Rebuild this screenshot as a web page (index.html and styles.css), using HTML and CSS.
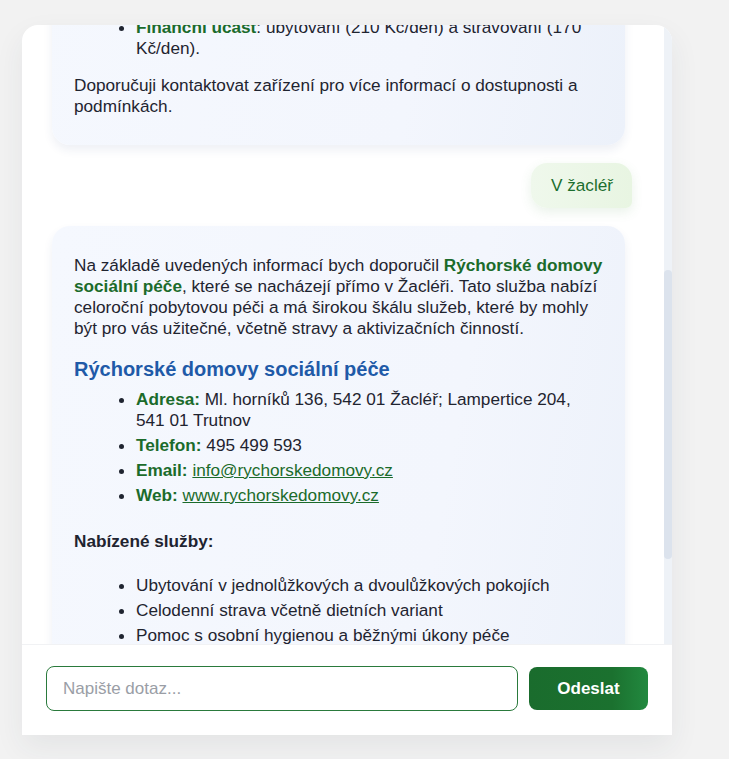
FILE: index.html
```html
<!DOCTYPE html>
<html lang="cs">
<head>
<meta charset="utf-8">
<title>Chat</title>
<link rel="stylesheet" href="styles.css">
</head>
<body>
<div class="page">
  <div class="chat">
    <div class="viewport">
      <div class="messages" id="messages">
        <div class="msg bot">
          <p>Dobrý den! Jsem virtuální asistent pro vyhledávání sociálních služeb. Napište mi, jaký typ služby hledáte a v jaké lokalitě, a pokusím se vám doporučit vhodné zařízení.</p>
        </div>
        <div class="msg user"><span>Domov pro seniory Trutnov</span></div>
        <div class="msg bot">
          <p>Podle dostupných informací bych vám doporučil <strong>Domov pro seniory Trutnov</strong>, který poskytuje celoroční pobytové služby pro seniory se sníženou soběstačností.</p>
          <h3>Domov pro seniory Trutnov</h3>
          <ul class="facts">
            <li><strong>Adresa:</strong> Kryblická 446, 541 01 Trutnov</li>
            <li><strong>Telefon:</strong> 499 840 111</li>
            <li><strong>Email:</strong> <a href="#">info@dstrutnov.cz</a></li>
            <li><strong>Kapacita:</strong> 120 lůžek</li>
            <li><strong>Cílová skupina:</strong> senioři od 65 let se sníženou soběstačností</li>
            <li><strong>Typ zařízení:</strong> domov pro seniory</li>
            <li><strong>Finanční účast</strong>: ubytování (210 Kč/den) a stravování (170 Kč/den).</li>
          </ul>
          <p>Doporučuji kontaktovat zařízení pro více informací o dostupnosti a podmínkách.</p>
        </div>
        <div class="msg user"><span>V žacléř</span></div>
        <div class="msg bot" id="current">
          <p>Na základě uvedených informací bych doporučil <strong>Rýchorské domovy sociální péče</strong>, které se nacházejí přímo v Žacléři. Tato služba nabízí celoroční pobytovou péči a má širokou škálu služeb, které by mohly být pro vás užitečné, včetně stravy a aktivizačních činností.</p>
          <h3>Rýchorské domovy sociální péče</h3>
          <ul class="facts contacts">
            <li><strong>Adresa:</strong> Ml. horníků 136, 542 01 Žacléř; Lampertice 204, 541&nbsp;01 Trutnov</li>
            <li><strong>Telefon:</strong> 495 499 593</li>
            <li><strong>Email:</strong> <a href="#">info@rychorskedomovy.cz</a></li>
            <li><strong>Web:</strong> <a href="#">www.rychorskedomovy.cz</a></li>
          </ul>
          <p class="label"><b>Nabízené služby:</b></p>
          <ul class="facts services">
            <li>Ubytování v jednolůžkových a dvoulůžkových pokojích</li>
            <li>Celodenní strava včetně dietních variant</li>
            <li>Pomoc s osobní hygienou a běžnými úkony péče</li>
            <li>Zdravotní a ošetřovatelská péče</li>
            <li>Aktivizační a volnočasové činnosti</li>
            <li>Sociální poradenství</li>
          </ul>
          <p>Pro aktuální informace o volných místech doporučuji zařízení kontaktovat.</p>
        </div>
      </div>
      <div class="track"><div class="thumb" id="thumb"></div></div>
    </div>
    <form class="composer" onsubmit="return false;">
      <input class="field" type="text" placeholder="Napište dotaz..." autofocus>
      <button class="send" type="submit">Odeslat</button>
    </form>
  </div>
</div>
<script src="script.js"></script>
</body>
</html>
```

FILE: styles.css
```css
* { box-sizing: border-box; }

html, body {
  margin: 0;
  height: 100%;
  overflow: hidden;
}

body {
  background: #f2f2f2;
  font-family: "Liberation Sans", Arial, Helvetica, sans-serif;
  color: #1f2430;
}

.page {
  padding: 25px 0 0 22px;
}

.chat {
  width: 650px;
  height: 710px;
  background: #ffffff;
  border-radius: 16px 16px 0 0;
  box-shadow: 0 12px 30px rgba(40, 50, 70, 0.07);
  display: flex;
  flex-direction: column;
  overflow: hidden;
}

.viewport {
  flex: 1;
  min-height: 0;
  display: flex;
}

.messages {
  flex: 1;
  min-width: 0;
  overflow-y: auto;
  scrollbar-width: none;
  padding: 25px 32px 20px 30px;
  display: flex;
  flex-direction: column;
  gap: 18px;
}

.messages::-webkit-scrollbar {
  display: none;
}

.track {
  flex: none;
  width: 8px;
  background: #eef2f7;
}

.thumb {
  width: 8px;
  background: #dce3ed;
  border-radius: 4px;
}

.msg {
  font-size: 17.2px;
  line-height: 21px;
}

.user {
  align-self: flex-end;
}
.user span {
  display: block;
  padding: 12px 19px 12px 20px;
  color: #1c6e2e;
  background: linear-gradient(90deg, #eff8ec 0%, #e8f5e2 100%);
  border-radius: 16px 16px 6px 16px;
  box-shadow: 0 4px 12px rgba(70, 150, 70, 0.12);
}

.bot {
  align-self: stretch;
  margin-right: 7px;
  padding: 13px 18px 12px 22px;
  background: linear-gradient(100deg, #f5f8fe 0%, #f3f6fd 65%, #ecf1fa 100%);
  border-radius: 18px;
  box-shadow: 0 5px 10px rgba(40, 70, 130, 0.08);
}

.bot p {
  margin: 16px 0;
}

.bot strong {
  color: #1b6b2b;
}

.bot b {
  color: #1f2430;
}

.bot h3 {
  margin: 18px 0 8px;
  font-size: 20px;
  line-height: 24px;
  color: #1f5aa8;
}

.facts {
  margin: 0 0 16px;
  padding-left: 62px;
}

.facts li {
  margin-bottom: 4px;
}

.facts a {
  color: #1b6b2b;
  text-decoration: underline;
}

.contacts {
  margin-bottom: 25px;
}

.bot p.label {
  margin: 0 0 23px;
}

.composer {
  flex: none;
  display: flex;
  align-items: center;
  gap: 11px;
  padding: 21px 24px 24px;
  background: #ffffff;
  border-top: 1px solid #f1f2f4;
}

.field {
  flex: 1;
  height: 45px;
  padding: 0 16px;
  border: 1px solid #2a7a3c;
  border-radius: 8px;
  font-family: "Liberation Sans", Arial, sans-serif;
  font-size: 17px;
  color: #1f2430;
  outline: none;
  caret-color: #6d9de8;
}

.field::placeholder {
  color: #9a9ea6;
}

.send {
  width: 119px;
  height: 43px;
  border: 0;
  border-radius: 8px;
  background: linear-gradient(90deg, #1a6c2d 0%, #1b712f 70%, #22893f 100%);
  color: #ffffff;
  font-family: "Liberation Sans", Arial, sans-serif;
  font-size: 17px;
  font-weight: bold;
}
```

FILE: script.js
```js
(function () {
  var box = document.getElementById('messages');
  var cur = document.getElementById('current');
  var thumb = document.getElementById('thumb');
  var offset = cur.getBoundingClientRect().top - box.getBoundingClientRect().top + box.scrollTop;
  box.scrollTop = offset - 201;
  function update() {
    var h = box.clientHeight;
    var total = box.scrollHeight;
    thumb.style.height = (h * h / total) + 'px';
    thumb.style.marginTop = (box.scrollTop / total * h) + 'px';
  }
  update();
  box.addEventListener('scroll', update);
})();
```
